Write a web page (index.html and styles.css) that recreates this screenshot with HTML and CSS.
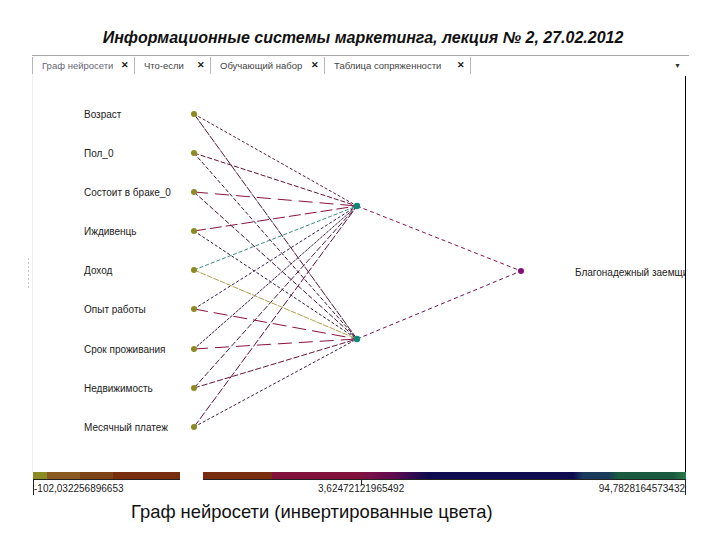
FILE: index.html
```html
<!DOCTYPE html>
<html lang="ru">
<head>
<meta charset="utf-8">
<title>Граф нейросети</title>
<link rel="stylesheet" href="styles.css">
</head>
<body>
<div class="page">
  <h1 class="title">Информационные системы маркетинга, лекция № 2, 27.02.2012</h1>
  <div class="tabs">
    <div class="tab active t1"><span>Граф нейросети</span><span class="x">✕</span></div>
    <div class="tab t2"><span>Что-если</span><span class="x">✕</span></div>
    <div class="tab t3"><span>Обучающий набор</span><span class="x">✕</span></div>
    <div class="tab t4"><span>Таблица сопряженности</span><span class="x">✕</span></div>
    <div class="tabfill"></div>
    <div class="drop">▼</div>
  </div>
  <svg class="graph" width="720" height="398" viewBox="0 74 720 398" xmlns="http://www.w3.org/2000/svg">
    <defs>
      <clipPath id="clipR"><rect x="0" y="74" width="685" height="398"/></clipPath>
    </defs>
    <line x1="32.5" y1="74" x2="32.5" y2="472" stroke="#f0f0f0" stroke-width="1"/>
    <line x1="28.5" y1="258" x2="28.5" y2="288" stroke="#c8c8d8" stroke-width="1" stroke-dasharray="2 2"/>
    <line x1="685.5" y1="76" x2="685.5" y2="472" stroke="#000" stroke-width="1"/>
    <g fill="none" stroke-width="1">
      <!-- to hidden 1 (357,206) -->
      <line x1="194" y1="114" x2="357" y2="206" stroke="#5a2040" stroke-dasharray="3 2"/>
      <line x1="194" y1="153" x2="357" y2="206" stroke="#6a1038" stroke-dasharray="5 2"/>
      <line x1="194" y1="192" x2="357" y2="206" stroke="#8a1040" stroke-dasharray="14 7"/>
      <line x1="194" y1="231" x2="357" y2="206" stroke="#8a1040" stroke-dasharray="12 4"/>
      <line x1="194" y1="270" x2="357" y2="206" stroke="#3a8a80" stroke-dasharray="4 2"/>
      <line x1="194" y1="309" x2="357" y2="206" stroke="#3a2050" stroke-dasharray="3 2"/>
      <line x1="194" y1="349" x2="357" y2="206" stroke="#402040" stroke-dasharray="3 1"/>
      <line x1="194" y1="388" x2="357" y2="206" stroke="#502040" stroke-dasharray="6 2"/>
      <line x1="194" y1="427" x2="357" y2="206" stroke="#601040" stroke-dasharray="8 2"/>
      <!-- to hidden 2 (357,339) -->
      <line x1="194" y1="114" x2="357" y2="339" stroke="#501838" stroke-dasharray="8 1"/>
      <line x1="194" y1="153" x2="357" y2="339" stroke="#401838" stroke-dasharray="4 2"/>
      <line x1="194" y1="192" x2="357" y2="339" stroke="#401838" stroke-dasharray="5 2"/>
      <line x1="194" y1="231" x2="357" y2="339" stroke="#301838" stroke-dasharray="3 2"/>
      <line x1="194" y1="270" x2="357" y2="339" stroke="#b0a050" stroke-dasharray="6 1"/>
      <line x1="194" y1="309" x2="357" y2="339" stroke="#8a1040" stroke-dasharray="14 6"/>
      <line x1="194" y1="349" x2="357" y2="339" stroke="#8a1040" stroke-dasharray="14 7"/>
      <line x1="194" y1="388" x2="357" y2="339" stroke="#6a1038" stroke-dasharray="6 2"/>
      <line x1="194" y1="427" x2="357" y2="339" stroke="#402040" stroke-dasharray="3 2"/>
      <!-- to output -->
      <line x1="357" y1="206" x2="521" y2="271" stroke="#8a1050" stroke-dasharray="4 3"/>
      <line x1="357" y1="339" x2="521" y2="271" stroke="#701050" stroke-dasharray="4 3"/>
    </g>
    <g fill="#8c8a22">
      <circle cx="194" cy="114" r="3"/>
      <circle cx="194" cy="153" r="3"/>
      <circle cx="194" cy="192" r="3"/>
      <circle cx="194" cy="231" r="3"/>
      <circle cx="194" cy="270" r="3"/>
      <circle cx="194" cy="309" r="3"/>
      <circle cx="194" cy="349" r="3"/>
      <circle cx="194" cy="388" r="3"/>
      <circle cx="194" cy="427" r="3"/>
    </g>
    <g fill="#108878">
      <circle cx="357" cy="206" r="3.2"/>
      <circle cx="357" cy="339" r="3.2"/>
    </g>
    <circle cx="521" cy="271" r="3" fill="#80107a"/>
    <g class="lbl">
      <text x="84" y="117.5">Возраст</text>
      <text x="84" y="156.5">Пол_0</text>
      <text x="84" y="195.5">Состоит в браке_0</text>
      <text x="84" y="234.5">Иждивенць</text>
      <text x="84" y="273.5">Доход</text>
      <text x="84" y="312.5">Опыт работы</text>
      <text x="84" y="352.5">Срок проживания</text>
      <text x="84" y="391.5">Недвижимость</text>
      <text x="84" y="430.5">Месячный платеж</text>
      <text x="575" y="275.5" clip-path="url(#clipR)">Благонадежный заемщик</text>
    </g>
  </svg>
  <div class="scale">
    <div class="bar"><div class="gap"></div></div>
    <div class="ticks">
      <span class="t-left">-102,032256896653</span>
      <span class="t-mid">3,62472121965492</span>
      <span class="t-right">94,7828164573432</span>
    </div>
  </div>
  <p class="caption">Граф нейросети (инвертированные цвета)</p>
</div>
</body>
</html>
```
FILE: styles.css
```css
* { box-sizing: border-box; }
html, body { margin: 0; padding: 0; background: #fff; }
body { width: 720px; height: 540px; overflow: hidden; font-family: "Liberation Sans", Arial, sans-serif; color: #111; }
.page { display: flex; flex-direction: column; width: 720px; height: 540px; }
.title {
  margin: 0;
  padding-top: 29px;
  height: 47px;
  line-height: 18px;
  font-size: 16px;
  font-weight: bold;
  font-style: italic;
  text-align: center;
  padding-left: 6px;
  color: #111;
}
.tabs {
  margin-top: 8px;
  margin-left: 32px;
  width: 657px;
  height: 19px;
  border-top: 1px solid #a8a8a8;
  display: flex;
  align-items: center;
  font-size: 9.5px;
  color: #444;
}
.tab {
  display: flex;
  justify-content: space-between;
  align-items: center;
  height: 17px;
  padding: 0 5px 0 9px;
  border-right: 1px solid #b8b8b8;
  white-space: nowrap;
  flex: none;
}
.tab.active { border-left: 1px solid #b8b8b8; color: #667; }
.t1 { width: 103px; }
.t2 { width: 76px; }
.t3 { width: 114px; }
.t4 { width: 146px; }
.tab .x { font-size: 9px; font-weight: bold; color: #222; }
.tabfill { flex: 1; }
.drop { font-size: 7px; color: #333; padding-right: 8px; }
.graph { display: block; flex: none; }
.lbl text { font-family: "Liberation Sans", Arial, sans-serif; font-size: 10px; fill: #222; }
.scale { margin-left: 33px; width: 653px; }
.bar {
  position: relative;
  height: 8px;
  border-bottom: 1px solid #222;
  background: linear-gradient(to right,
    #8c8a22 0px, #8c8a22 14px,
    #8a5a20 14px, #8a5a20 47px,
    #7e4416 47px, #7e4416 80px,
    #7a2c0e 80px, #7a2c0e 239px,
    #82123c 239px, #82123c 327px,
    #7a1048 335px,
    #5e0a50 362px,
    #300a50 380px,
    #0e0a50 395px, #0e0a50 540px,
    #1a3a5a 550px, #1a3a5a 575px,
    #1a5a40 585px, #1a5a40 640px,
    #2a7a4a 653px);
}
.gap { position: absolute; left: 147px; top: 0; width: 23px; height: 8px; background: #fff; }
.ticks {
  position: relative;
  height: 15px;
  font-size: 10px;
  color: #222;
  border-left: 1px solid #222;
  border-right: 1px solid #222;
  line-height: 15px;
}
.ticks span { position: absolute; top: 1px; white-space: nowrap; }
.t-left { left: 0; }
.t-mid { left: 284px; }
.t-right { right: 0; }
.ticks::after { content: ""; position: absolute; left: 327px; top: 0; width: 1px; height: 5px; background: #222; }
.caption {
  margin: 6px 0 0 0;
  padding-left: 131px;
  font-size: 18.4px;
  line-height: 22px;
  color: #111;
}
```
